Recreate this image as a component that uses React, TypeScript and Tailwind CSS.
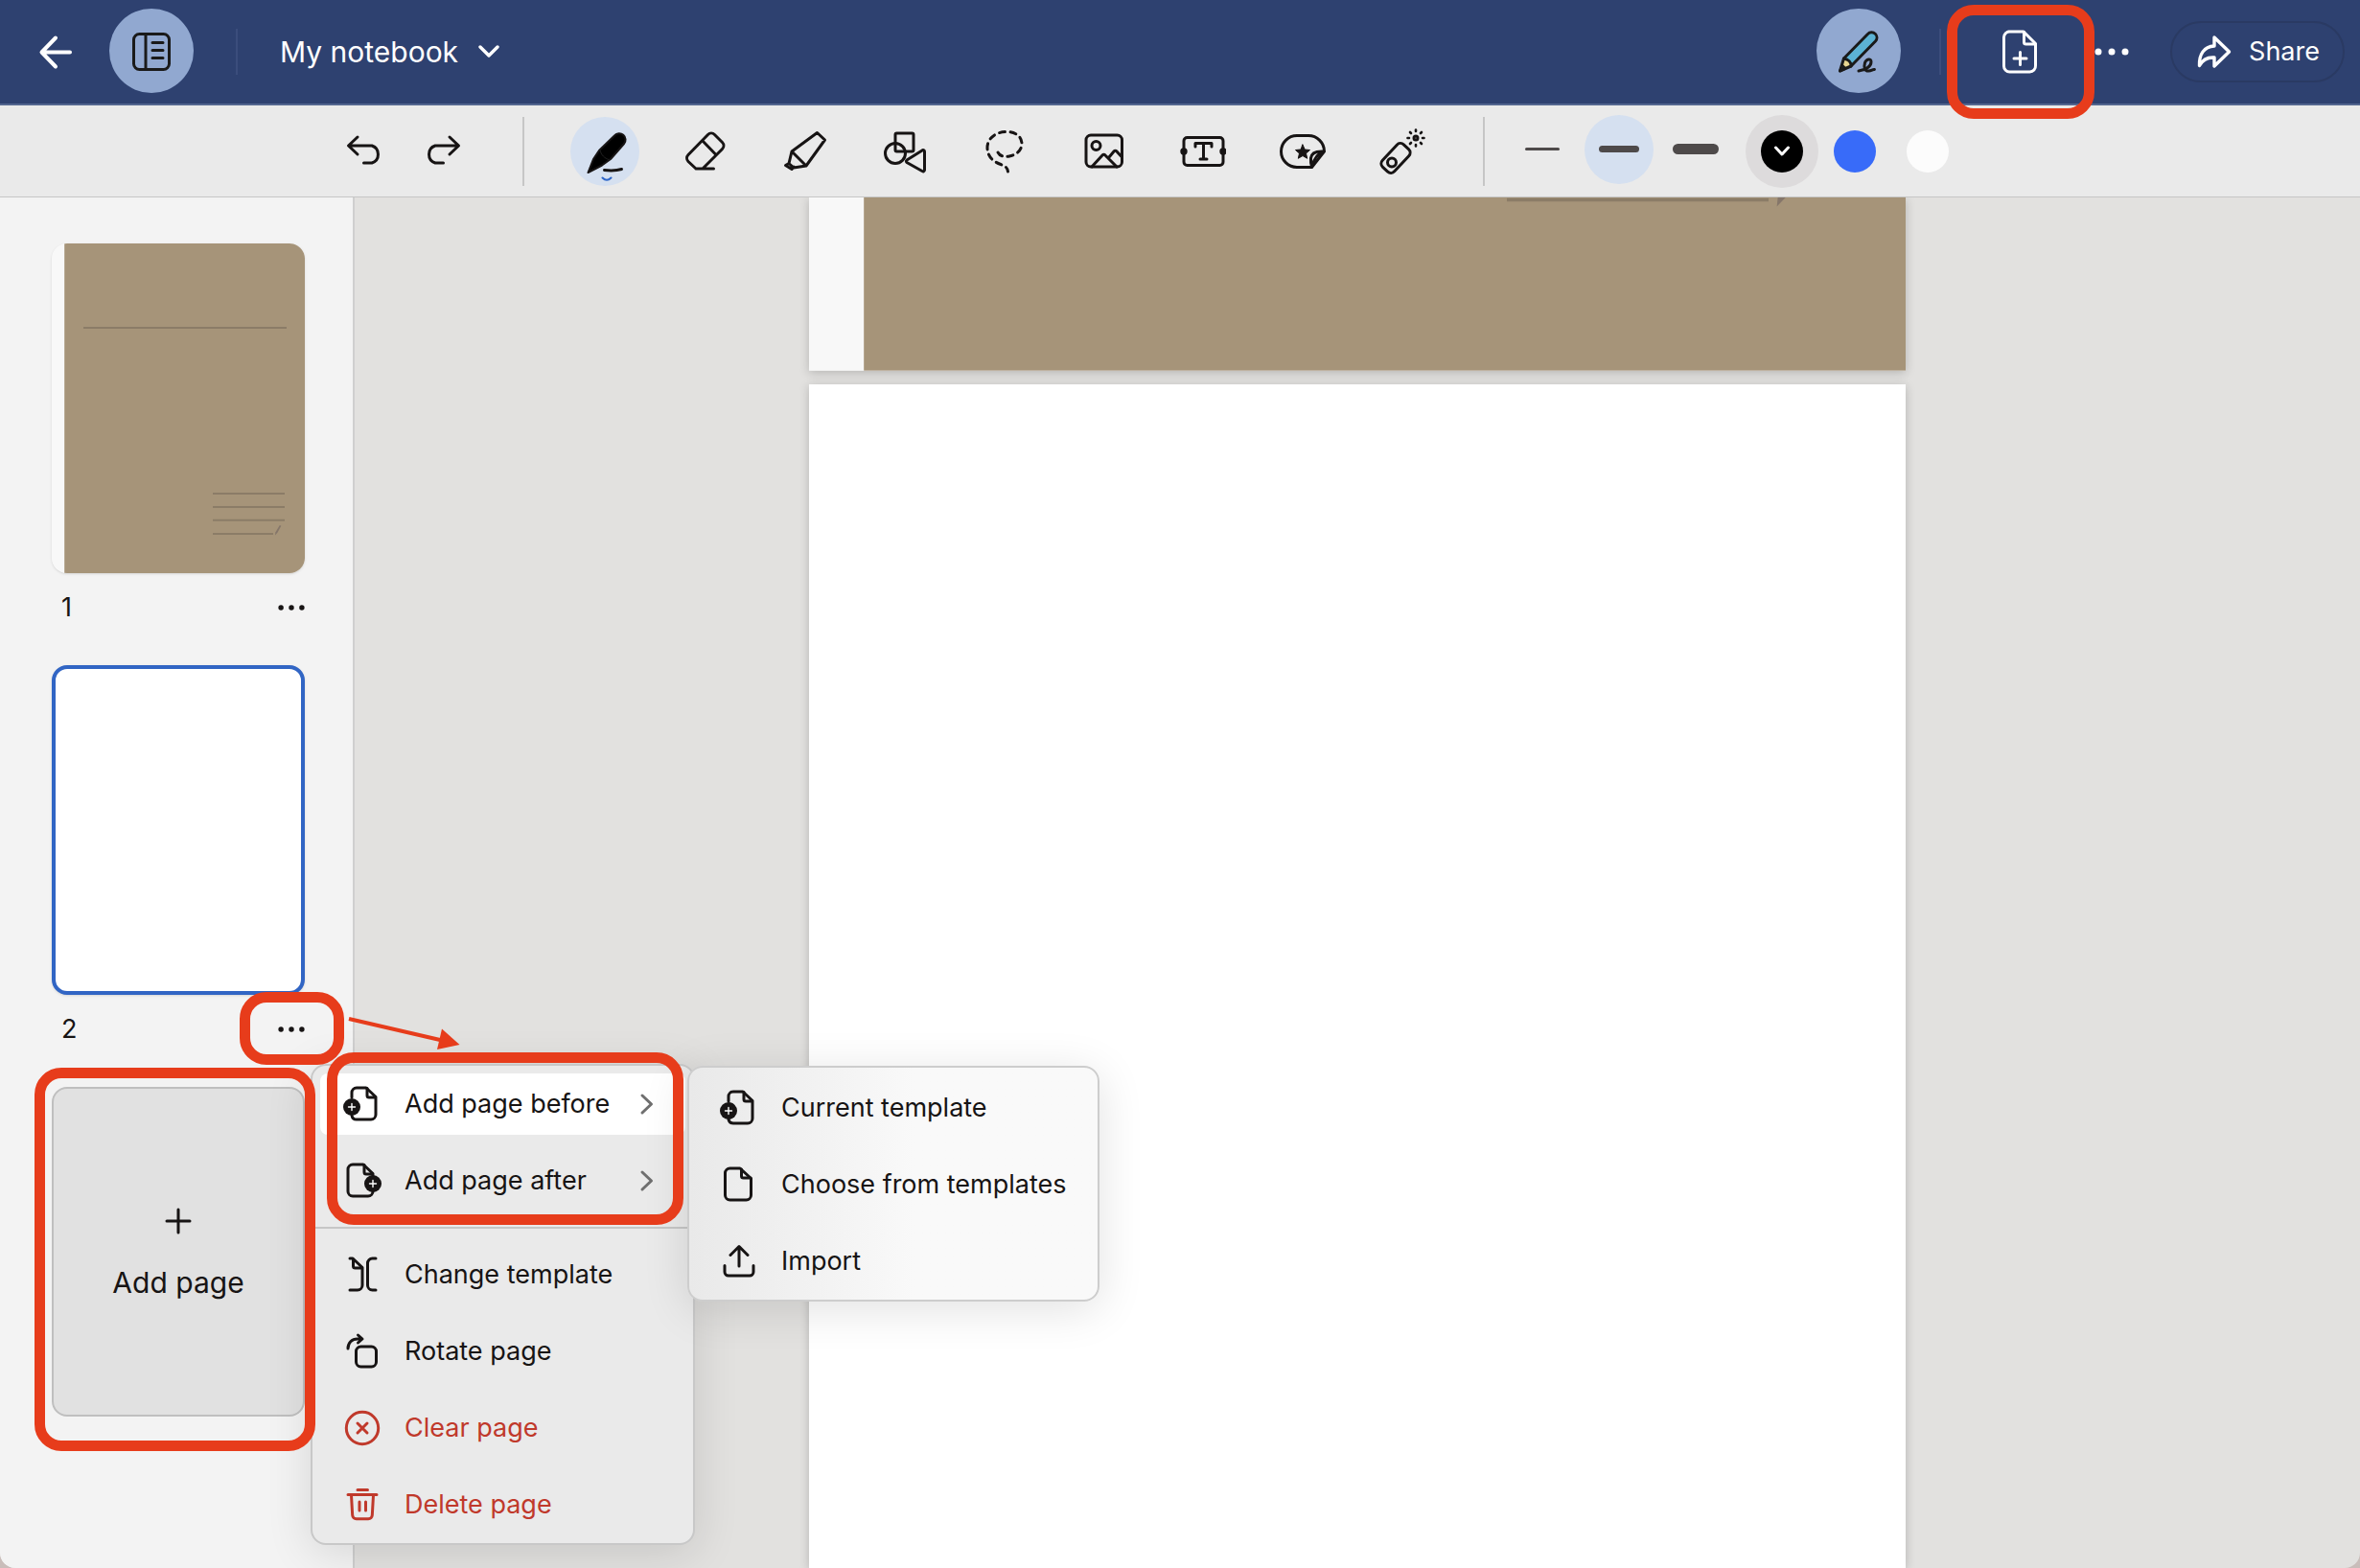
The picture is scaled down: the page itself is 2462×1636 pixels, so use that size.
import type { ReactNode } from 'react';

type IconProps = { className?: string; children: ReactNode; box?: string };

function Icon({ className = 'size-12', children, box = '0 0 48 48' }: IconProps) {
  return (
    <svg
      viewBox={box}
      className={`shrink-0 ${className}`}
      fill="none"
      stroke="currentColor"
      strokeWidth={3}
      strokeLinecap="round"
      strokeLinejoin="round"
      aria-hidden="true"
    >
      {children}
    </svg>
  );
}

function Cover({ line }: { line: number }) {
  return (
    <svg viewBox="0 0 264 344" className="block w-full shrink-0" aria-hidden="true">
      <rect width="264" height="344" fill="#f8f8f8" />
      <rect x="13.200" width="251" height="344" fill="#a69479" />
      <path
        d="M33 88h212M168 261h75M168 275h75M168 288.800h75M168 302.900h63"
        stroke="#8b7c67"
        strokeWidth={line}
      />
      <path d="M233 304.500l.300-3 4.500-7.500 1.500.800-4 7.300z" fill="#85766a" />
    </svg>
  );
}

function Dots({ className }: { className: string }) {
  return (
    <svg viewBox="0 0 36 10" className={className} fill="currentColor" aria-hidden="true">
      <circle cx="4" cy="5" r="3.500" />
      <circle cx="18" cy="5" r="3.500" />
      <circle cx="32" cy="5" r="3.500" />
    </svg>
  );
}

const icons = {
  undo: (
    <Icon>
      <path d="M16 9l-9.500 9 9.500 9M7 18h24a9.500 9.500 0 0 1 0 18h-8.500" />
    </Icon>
  ),
  redo: (
    <Icon>
      <path d="M32 9l9.500 9-9.500 9M41 18H17a9.500 9.500 0 0 0 0 18h8.500" />
    </Icon>
  ),
  addBefore: (
    <Icon className="size-10" box="1 0 40 40">
      <path d="M10 13V8a5 5 0 0 1 5-5h10l10 9.500V31a5 5 0 0 1-5 5H15a5 5 0 0 1-5-4" />
      <path d="M26 3.500V11a2 2 0 0 0 2 2h6.500" />
      <circle cx="10" cy="23" r="9" fill="currentColor" stroke="none" />
      <path d="M10 19.500v7M6.500 23h7" stroke="#fff" strokeWidth="1.400" />
    </Icon>
  ),
  addAfter: (
    <Icon className="size-10" box="0 0 40 40">
      <path d="M31 31a5 5 0 0 1-5 5H10a5 5 0 0 1-5-5V8a5 5 0 0 1 5-5h11l10 9.500V15" />
      <path d="M22 3.500V11a2 2 0 0 0 2 2h6.500" />
      <circle cx="31" cy="23" r="9" fill="currentColor" stroke="none" />
      <path d="M31 19.500v7M27.500 23h7" stroke="#fff" strokeWidth="1.400" />
    </Icon>
  ),
  page: (
    <Icon className="size-10" box="0 0 40 40">
      <path d="M10.500 3H21l11.500 10.500V31a5 5 0 0 1-5 5h-17a5 5 0 0 1-5-5V8a5 5 0 0 1 5-5" />
      <path d="M22.500 4v7a2 2 0 0 0 2 2H32" />
    </Icon>
  ),
  change: (
    <Icon className="size-10" box="0 0 40 40">
      <path d="M7 3h3l10 9.500V31a5 5 0 0 1-5 5H7" />
      <path d="M10.500 4v7a2 2 0 0 0 2 2h7M34 3h-3.500a5 5 0 0 0-5 5v23a5 5 0 0 0 5 5H34" />
    </Icon>
  ),
  rotate: (
    <Icon className="size-10" box="0 0 40 40">
      <path d="M5 17c0-6 4-10 10-10h4M15.500 3l4.500 4-4.500 4" />
      <rect x="13.500" y="15" width="21" height="21" rx="5" />
    </Icon>
  ),
  clear: (
    <Icon className="size-10" box="0 0 40 40">
      <circle cx="20" cy="20" r="16.700" />
      <path d="M15 15l10 10M25 15L15 25" />
    </Icon>
  ),
  trash: (
    <Icon className="size-10" box="0 0 40 40">
      <path d="M15 4.500h10.500M5 9.500h30M8.500 10l1.200 21a4 4 0 0 0 4 3.700h12.600a4 4 0 0 0 4-3.700L31.500 10M17 17v9M23.500 17v9" />
    </Icon>
  ),
  importFile: (
    <Icon className="size-10" box="0 0 40 40">
      <path d="M20 25V5M11 13.500L20 4.500l9 9M5 24.500V31a4 4 0 0 0 4 4h22a4 4 0 0 0 4-4v-6.500" />
    </Icon>
  ),
};

const tools = [
  {
    name: 'Eraser',
    shape: (
      <path d="M14 42L6 34.500a5 5 0 0 1 0-7L26.500 6.500a5 5 0 0 1 7 0l8 8a5 5 0 0 1 0 7L21 42zM21 13l13.500 14M14 42h18.500" />
    ),
  },
  {
    name: 'Highlighter',
    shape: (
      <path d="M10 24L36.500 4.500l8 7.500-19.500 27zM10 24l15 15M10 24L7 36.500l5 4.500 13-2M7 36.500l-3.500 2 6.500 4 2-2.500" />
    ),
  },
  {
    name: 'Shapes',
    shape: (
      <>
        <rect x="14" y="5" width="19" height="19" rx="1.500" />
        <circle cx="14" cy="26" r="10.500" />
        <path d="M44.500 24v19.500a1.500 1.500 0 0 1-2.500 1L26 35.500a1.500 1.500 0 0 1 0-2.400L42 23a1.500 1.500 0 0 1 2.500 1z" />
      </>
    ),
  },
  {
    name: 'Lasso',
    shape: (
      <path
        d="M17 25c2 4 7 5 12 4 8-1.500 13-7 13-13 0-8-7-12.500-16-12.500C14 3.500 6 11 6 20c0 10 7 15 14 17.500 5 2 7 3.500 7.500 7.500"
        strokeDasharray="6 5.500"
      />
    ),
  },
  {
    name: 'Image',
    shape: (
      <>
        <rect x="5" y="7" width="37.500" height="33" rx="5" />
        <circle cx="15.500" cy="18" r="4.500" />
        <path d="M11 40l11-12a2 2 0 0 1 3 0l12 12M29 30l5-6a2 2 0 0 1 3 0l5.500 6" />
      </>
    ),
  },
  {
    name: 'Text',
    shape: (
      <>
        <rect x="3" y="9.500" width="41" height="29" rx="3.500" />
        <path d="M15 19v-3.500h17V19M23.500 15.500V32M20 32h7" />
        <circle cx="3" cy="24" r="2.200" fill="currentColor" />
        <circle cx="44" cy="24" r="2.200" fill="currentColor" />
      </>
    ),
  },
  {
    name: 'Sticker',
    shape: (
      <>
        <path d="M17 7.500h12A16.500 16.500 0 0 1 45.500 24L32.500 40.500H17a16.500 16.500 0 0 1 0-33z" />
        <path d="M45 24c-8-.500-13 2-13.500 7-.200 3-.200 6 1 9M45 24c-6 2-10 7-12.500 16" />
        <path
          d="M23 17l2.200 5 5.300.500-4 3.500 1.200 5.300L23 28.500l-4.700 2.800 1.200-5.300-4-3.500 5.300-.500z"
          fill="currentColor"
          strokeWidth="1"
        />
      </>
    ),
  },
  {
    name: 'Laser pointer',
    shape: (
      <>
        <rect x="-16" y="-8.500" width="32" height="17" rx="5" transform="translate(16 31) rotate(-47)" />
        <circle cx="12" cy="35.500" r="4.500" />
        <circle cx="37" cy="10" r="2" />
        <path
          d="M37 1.500v1.500M37 17v1.500M28.500 10H30M44 10h1.500M31 4l1 1M42 15l1 1M43 4l-1 1M32 15l-1 1"
          strokeWidth="2.600"
        />
      </>
    ),
  },
];

const strokes = [
  { name: 'Thin', bar: 'h-[3px] w-9', active: false },
  { name: 'Medium', bar: 'h-[7px] w-[42px]', active: true },
  { name: 'Thick', bar: 'h-[11px] w-12', active: false },
];

type MenuEntry = { label: string; icon: ReactNode; more?: boolean; active?: boolean; danger?: boolean };

const addItems: MenuEntry[] = [
  { label: 'Add page before', icon: icons.addBefore, more: true, active: true },
  { label: 'Add page after', icon: icons.addAfter, more: true },
];

const pageItems: MenuEntry[] = [
  { label: 'Change template', icon: icons.change },
  { label: 'Rotate page', icon: icons.rotate },
  { label: 'Clear page', icon: icons.clear, danger: true },
  { label: 'Delete page', icon: icons.trash, danger: true },
];

const templateItems: MenuEntry[] = [
  { label: 'Current template', icon: icons.addBefore },
  { label: 'Choose from templates', icon: icons.page },
  { label: 'Import', icon: icons.importFile },
];

function MenuItem({ label, icon, more, active, danger }: MenuEntry) {
  return (
    <button
      role="menuitem"
      className={`flex h-16 items-center gap-6 rounded-lg pr-8 pl-6 text-[27px] whitespace-nowrap ${
        active ? 'bg-white' : ''
      } ${danger ? 'text-[#c0392b]' : ''}`}
    >
      {icon}
      {label}
      {more && (
        <Icon className="ml-auto h-6 w-4 text-[#6f6f6f]" box="0 0 16 24">
          <path d="M3 3l9.500 9L3 21" />
        </Icon>
      )}
    </button>
  );
}

function Header() {
  return (
    <header className="flex h-[110px] shrink-0 items-center border-b-2 border-[#53668f] bg-[#2e4170] pr-4 pl-[34px] text-white">
      <button aria-label="Back">
        <Icon>
          <path d="M24 9.500L9.500 24.500 24 39.500M10 24.500h29" strokeWidth="4" />
        </Icon>
      </button>
      <button
        aria-label="Pages panel"
        className="-mt-0.5 ml-8 flex size-[88px] items-center justify-center rounded-full bg-[#91a8d0] text-[#1a1a1a]"
      >
        <Icon box="0 -1 48 48">
          <rect x="5.500" y="5.500" width="37" height="37" rx="6" />
          <path d="M18 6v36M25 14.500h11M25 22.500h11M25 30.500h11" />
        </Icon>
      </button>
      <div className="ml-11 h-12 w-0.5 bg-[#3b4d7c]" />
      <button className="ml-11 flex items-center gap-5 text-[30px]">
        My notebook
        <Icon className="h-4 w-6" box="0 0 24 16">
          <path d="M3 3l9 9 9-9" strokeWidth="3.400" />
        </Icon>
      </button>
      <button
        aria-label="Editing mode"
        className="-mt-0.5 ml-auto flex size-[88px] items-center justify-center rounded-full bg-[#91a8d0] text-[#1a1a1a]"
      >
        <Icon box="0 -1 48 48">
          <path d="M8.500 31L33.500 5.500a5 5 0 0 1 8 7.500L16 39z" fill="#5cb3d4" />
          <path d="M8.500 31L4.500 44 16 39c.500-4-3-7-7.500-8z" fill="#e8d690" />
          <path d="M4.500 44l3-5 2.500 2.500z" fill="currentColor" />
          <path d="M24 44c8-1 13-5 13-9.500 0-4-5-3-6.500 1-1.500 5 0 9 4 8.500 3 0 4-2 6-1.500" />
        </Icon>
      </button>
      <div className="ml-10 h-12 w-0.5 bg-[#3b4d7c]" />
      <button aria-label="Add page" className="ml-[58px]">
        <Icon>
          <path d="M12 3h16l12.500 12.500v23A6 6 0 0 1 34.500 45h-21a6 6 0 0 1-6-6V9a6 6 0 0 1 6-6" />
          <path d="M28.500 3.500V14a2 2 0 0 0 2 2H40M24.500 24.500v13M18 31h13" />
        </Icon>
      </button>
      <button aria-label="More" className="ml-[54px]">
        <Dots className="h-2.5 w-9" />
      </button>
      <button className="ml-[43px] flex h-16 items-center gap-4 rounded-full border-2 border-[#2a3a63] px-6 text-[27px]">
        <Icon className="size-10" box="0 0 40 40">
          <path
            d="M20 5l15.500 15L20 35v-9c-7-.500-12 2-15.500 8.500C4 23 9 14.500 20 14z"
            strokeWidth="3.400"
          />
        </Icon>
        Share
      </button>
    </header>
  );
}

function Toolbar() {
  return (
    <div className="flex h-24 shrink-0 items-center border-b border-[#c6c6c6] bg-[#eaeaea] pl-[345px]">
      <button aria-label="Undo" className="flex size-[72px] items-center justify-center">
        {icons.undo}
      </button>
      <button aria-label="Redo" className="ml-2 flex size-[72px] items-center justify-center">
        {icons.redo}
      </button>
      <div className="ml-12 h-[72px] w-0.5 bg-[#c6c6c6]" />
      <div className="ml-12 flex gap-8">
        <button
          aria-label="Pen"
          className="relative flex size-[72px] items-center justify-center rounded-full bg-[#d5e0f0]"
        >
          <Icon box="-1 -1 48 48">
            <path
              d="M17 22L33 6.500a6.500 6.500 0 0 1 10 8.500L29 31l-9 6.500L5.500 45 11 31z"
              fill="#000"
              strokeWidth="2"
            />
            <path d="M18 22c1.500 5 4.500 8 9 9.500" stroke="#222" strokeWidth="1" />
            <path d="M22.500 42.500c7 .700 13 .500 18-1" strokeWidth="3" />
          </Icon>
          <Icon className="absolute bottom-1 left-8 h-1.5 w-3 text-[#2f66c8]" box="0 0 12 6">
            <path d="M1.500 1.500Q6 6 10.500 1.500" strokeWidth="2" />
          </Icon>
        </button>
        {tools.map((t) => (
          <button key={t.name} aria-label={t.name} className="flex size-[72px] items-center justify-center">
            <Icon box="-1 0 48 48">{t.shape}</Icon>
          </button>
        ))}
      </div>
      <div className="ml-12 h-[72px] w-0.5 bg-[#c6c6c6]" />
      <div className="ml-6 flex gap-2">
        {strokes.map((s) => (
          <button
            key={s.name}
            aria-label={s.name}
            className={`-mt-1 flex size-[72px] items-center justify-center rounded-full ${
              s.active ? 'bg-[#d5e0f0]' : ''
            }`}
          >
            <span className={`rounded-full bg-[#4e4a4a] ${s.bar}`} />
          </button>
        ))}
      </div>
      <div className="ml-4 flex">
        <button
          aria-label="Black"
          className="flex size-[76px] items-center justify-center rounded-full bg-[#dddbdc] text-white"
        >
          <span className="flex size-11 items-center justify-center rounded-full bg-black">
            <Icon className="h-3 w-5" box="0 0 20 12">
              <path d="M3.500 2l6.500 7 6.500-7" />
            </Icon>
          </span>
        </button>
        <button aria-label="Blue" className="flex size-[76px] items-center justify-center">
          <span className="size-11 rounded-full bg-[#386bf9]" />
        </button>
        <button aria-label="White" className="flex size-[76px] items-center justify-center">
          <span className="size-11 rounded-full bg-[#fcfcfc]" />
        </button>
      </div>
    </div>
  );
}

function Thumb({ page, selected, children }: { page: number; selected?: boolean; children?: ReactNode }) {
  return (
    <li className="flex flex-col">
      <button
        aria-label={`Page ${page}`}
        className={`h-[344px] overflow-hidden rounded-2xl shadow-sm ${
          selected ? 'border-4 border-[#3165c4] bg-white' : ''
        }`}
      >
        {children}
      </button>
      <div className="flex h-24 items-center justify-between pb-6 pl-2.5 text-[27px]">
        {page}
        <button aria-label={`Page ${page} options`}>
          <Dots className="h-2 w-7" />
        </button>
      </div>
    </li>
  );
}

function Sidebar() {
  return (
    <aside className="w-[370px] shrink-0 border-r-2 border-[#cfcfcf] bg-[#f3f3f3] pt-12 pr-[50px] pl-[54px]">
      <ul>
        <Thumb page={1}>
          <Cover line={2} />
        </Thumb>
        <Thumb page={2} selected />
      </ul>
      <button className="flex h-[344px] w-full flex-col items-center justify-center gap-7 rounded-2xl border-2 border-[#bfbfbf] bg-[#e1e1e1] pt-2 text-[30px]">
        <Icon className="size-7" box="0 0 28 28">
          <path d="M14 2v24M2 14h24" />
        </Icon>
        Add page
      </button>
    </aside>
  );
}

export default function App() {
  return (
    <div className="bg-[#c9bdba]">
      <div className="relative flex h-screen flex-col overflow-hidden rounded-b-2xl bg-[#e2e1df] font-[Inter,sans-serif] text-[#171414]">
        <Header />
        <Toolbar />
        <div className="flex min-h-0 flex-1">
          <Sidebar />
          <main className="flex min-w-0 flex-1 flex-col items-center gap-3.5 overflow-hidden">
            <div className="w-[1144px] shadow-[0_2px_10px_rgba(0,0,0,0.2)]">
              <div className="flex h-[181px] flex-col justify-end overflow-hidden">
                <Cover line={0.8} />
              </div>
            </div>
            <div className="w-[1144px] flex-1 bg-white shadow-[0_2px_10px_rgba(0,0,0,0.2)]" />
          </main>
        </div>

        <div
          role="menu"
          className="absolute top-[1110px] left-[324px] flex w-[401px] flex-col rounded-2xl border-2 border-[#c8c8c8] bg-[#eaeaea] shadow-[0_8px_48px_rgba(0,0,0,0.12)]"
        >
          <div className="flex flex-col gap-4 px-2 pt-2 pb-4">
            {addItems.map((item) => (
              <MenuItem key={item.label} {...item} />
            ))}
          </div>
          <div className="h-0.5 bg-[#c6c6c6]" />
          <div className="flex flex-col gap-4 px-2 pt-4 pb-2">
            {pageItems.map((item) => (
              <MenuItem key={item.label} {...item} />
            ))}
          </div>
        </div>

        <div
          role="menu"
          className="absolute top-[1112px] left-[717px] flex w-[430px] flex-col gap-4 rounded-2xl border-2 border-[#cdcdcd] bg-linear-to-r from-[#e9e9e9] to-[#f9f9f9] to-55% px-2 pt-2.5 pb-2 shadow-[0_8px_48px_rgba(0,0,0,0.12)]"
        >
          {templateItems.map((item) => (
            <MenuItem key={item.label} {...item} />
          ))}
        </div>

        <div className="pointer-events-none absolute top-[5px] left-[2031px] h-[119px] w-[154px] rounded-[28px] border-[11px] border-[#e73c1b]" />
        <div className="pointer-events-none absolute top-[1035px] left-[250px] h-[76px] w-[109px] rounded-[28px] border-[11px] border-[#e73c1b]" />
        <div className="pointer-events-none absolute top-[1114px] left-[36px] h-[400px] w-[293px] rounded-[28px] border-[11px] border-[#e73c1b]" />
        <div className="pointer-events-none absolute top-[1098px] left-[341px] h-[180px] w-[372px] rounded-[28px] border-[11px] border-[#e73c1b]" />
        <svg
          viewBox="0 0 120 40"
          className="pointer-events-none absolute top-[1060px] left-[362px] h-10 w-[120px]"
          aria-hidden="true"
        >
          <path d="M2 3L97 25" stroke="#e73c1b" strokeWidth="4" />
          <path d="M117.500 30L99 13.500 94 35z" fill="#e73c1b" />
        </svg>
      </div>
    </div>
  );
}
